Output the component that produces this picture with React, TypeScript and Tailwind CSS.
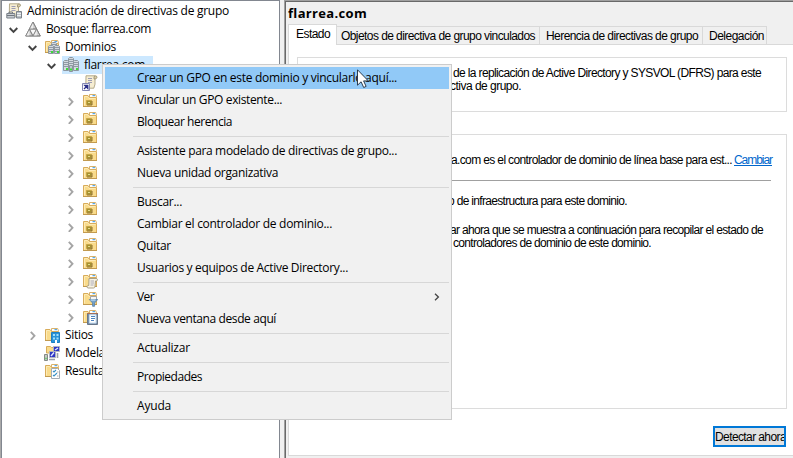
import { useLayoutEffect, useRef } from "react";
import type { ReactNode } from "react";
import { clsx } from "clsx";

const UI = "font-['Open_Sans','Noto_Sans',sans-serif] text-[12px]";
const CLASSIC = "font-['Liberation_Sans',Arial,sans-serif] text-[12px]";

/** Single-line label whose tracking is adjusted so that it fills `w` pixels. */
function Label({ w, className, children }: { w: number; className?: string; children: string }) {
  const ref = useRef<HTMLSpanElement>(null);
  useLayoutEffect(() => {
    const el = ref.current;
    if (!el) return;
    el.style.letterSpacing = "0px";
    const natural = el.getBoundingClientRect().width;
    el.style.letterSpacing = `${(w - natural) / children.length}px`;
  }, [w, children]);
  return (
    <span ref={ref} className={clsx("inline-block shrink-0 whitespace-pre", className)}>
      {children}
    </span>
  );
}

function Icon({ children }: { children: ReactNode }) {
  return (
    <svg width="16" height="16" viewBox="0 0 16 16" className="shrink-0">
      {children}
    </svg>
  );
}

function Scroll() {
  return (
    <>
      <path d="M4 .8h9v8.4l-1.2 4H2.6c-1.4-.2-1.3-2.2 0-2.4h1.2z" fill="#f6edd2" stroke="#aba07f" strokeWidth=".9" />
      <path d="M12 4V2c.2-1.6 3-1.5 3 .2 0 1.3-1 1.8-3 1.8z" fill="#dccfa8" stroke="#948a6c" strokeWidth=".8" />
      <path d="M6 3.5h4M6 5.5h4M6 7.5h4" stroke="#9c9cb4" />
    </>
  );
}

function Folder() {
  return (
    <>
      <path d="M7.5 4V1.5h6.2L14.500 4" fill="#fff" stroke="#d9b26c" />
      <path d="M10.500 2.600h2.500" stroke="#55a9ec" strokeWidth="1.2" />
      <path d="M1.500 13.500v-11h4.500l1.500 2h7v9z" fill="#f9db8b" stroke="#d8ac5b" />
      <path d="M2.500 12.500v-9h3l1.500 2h6.500" fill="none" stroke="#fdebb5" />
      <path d="M1 13.500h14" stroke="#c19a50" />
    </>
  );
}

function Server({ x, y, h }: { x: number; y: number; h: number }) {
  return (
    <g transform={`translate(${x} ${y})`}>
      <path d={`M.5 1.500l1-1h3l1 1v${h - 2}h-5z`} fill="#d3d9df" stroke="#8d979f" />
      <path d="M1 2.500h4M1 4.500h4M1 6.500h4" stroke="#7f8a94" strokeWidth=".8" />
      <path d={`M3 ${h - 2}h2`} stroke="#3ddb3a" strokeWidth="1.800" />
    </g>
  );
}

function OuBadge() {
  return (
    <>
      <path d="M4.500 7.500h5v4h-5z" fill="#a5922f" stroke="#c7a548" />
      <path d="M6 9.500h2" stroke="#e6d98a" />
      <path d="M5 12h5V8" fill="none" stroke="#80682a" strokeWidth=".9" />
    </>
  );
}

const icons = {
  console: (
    <Icon>
      <g transform="translate(-.5 0)"><Scroll /></g>
      <path d="M.8 10.500h8v4.500h-8z" fill="#c9cdd2" stroke="#7b828a" />
      <path d="M3 10V9h3.500v1M1 12.500h7.500" fill="none" stroke="#6f767e" />
      <path d="M10.500 8.500h5v6.500h-5z" fill="#bac0c6" stroke="#7b828a" />
      <path d="M11 10.500h4M11 12.500h4" stroke="#edf0f2" />
    </Icon>
  ),
  forest: (
    <Icon>
      <path d="M8 1l7.300 14H.7z" fill="#d2d2d2" stroke="#858585" strokeWidth=".9" />
      <path d="M4.300 8h7.400L8 15z" fill="#f8f8f8" stroke="#858585" strokeWidth=".9" />
      <path d="M8 1v7H4.300zM4.300 8v7H.7zM11.700 8v7H8z" fill="#eee" />
      <path d="M8 1l7.300 14H.7zM4.300 8h7.400L8 15z" fill="none" stroke="#858585" strokeWidth=".9" />
    </Icon>
  ),
  domains: (
    <Icon>
      <Folder />
      <Server x={7} y={3} h={9} />
      <Server x={4} y={6} h={9} />
      <Server x={10} y={6} h={9} />
    </Icon>
  ),
  domain: (
    <Icon>
      <Server x={5} y={0} h={12} />
      <Server x={0} y={3} h={11} />
      <Server x={10} y={3} h={11} />
      <path d="M6.500 8.500h3v6h-3z" fill="#c0c8cf" stroke="#8b959e" />
      <path d="M7 12.500h2" stroke="#3ddb3a" strokeWidth="2" />
    </Icon>
  ),
  link: (
    <Icon>
      <Scroll />
      <path d="M.500 8.500h7v7h-7z" fill="#fff" stroke="#8487b3" />
      <path d="M2 14l3-3M2.800 10.500h3v3z" stroke="#2b2f88" fill="#2b2f88" strokeWidth="1.300" />
    </Icon>
  ),
  ou: (
    <Icon>
      <Folder />
      <OuBadge />
    </Icon>
  ),
  gpoFolder: (
    <Icon>
      <Folder />
      <path d="M7 5.500h7c2 0 2 2.500.3 2.500H13.500L13 13c0 1.500-.6 2-1.500 2H6c-1.500-.3-1.300-2.200 0-2.500h.8z" fill="#f8f3e2" stroke="#a0977f" strokeWidth=".9" />
      <path d="M8.500 8h3.500M8.500 10h3.500M8.500 12h3" stroke="#a3a3b5" strokeWidth=".9" />
    </Icon>
  ),
  wmi: (
    <Icon>
      <Folder />
      <path d="M8.500 5.500h6v4h-6z" fill="#f6f6f6" stroke="#a5a5a5" />
      <path d="M7.300 8.500h8.400L12.600 12v3.300h-2V12z" fill="#74a2cb" stroke="#557fa6" strokeWidth=".8" />
      <path d="M8.500 9h5" stroke="#d6ecfb" />
    </Icon>
  ),
  starter: (
    <Icon>
      <Folder />
      <path d="M5.500 4.500h10v11h-10z" fill="#7891ad" stroke="#68778b" />
      <path d="M5 4.500h11" stroke="#a76e55" />
      <path d="M7.500 5.800h6.500v8.200H7.500z" fill="#fff" stroke="#c5dcf0" />
      <path d="M9 7.500h4M9 9.500h4M9 11.500h3" stroke="#4b82be" />
    </Icon>
  ),
  sites: (
    <Icon>
      <Folder />
      <path d="M7.500 5.500h8v10h-8z" fill="#2a93d8" stroke="#1c7fc2" />
      <path d="M9 7h2v2H9zM12.500 7h2v2h-2zM9 10.500h2v2H9zM12.500 10.500h2v2h-2z" fill="#9fe0fb" />
      <path d="M11 13h2v3h-2z" fill="#fff" />
    </Icon>
  ),
  model: (
    <Icon>
      <path d="M2.500 8V1.500h4l1 1h4V8z" fill="#f9db8b" stroke="#d8ac5b" />
      <path d="M9.500 1.500h6v5h-6zM5.500 6.500h6v6h-6z" fill="#2d35c4" stroke="#b0b3c0" />
      <path d="M7 11l3-3.500M11 5l3-2" stroke="#dfe5ff" strokeWidth="1.400" />
      <path d="M.500 9.500h3v6h-3z" fill="#c6cac4" stroke="#848a86" />
      <path d="M1.500 13.500h1" stroke="#27cd38" strokeWidth="1.600" />
      <path d="M5 14.500h6M13.500 8v5" stroke="#9ba1aa" strokeWidth="1.600" />
    </Icon>
  ),
  results: (
    <Icon>
      <Folder />
      <path d="M7.500 5.500h6l2 2v8h-8z" fill="#fff" stroke="#a3abb5" />
      <path d="M9 8l1 1 2-2M9 12l1 1 3-3" fill="none" stroke="#3a91c6" strokeWidth="1.100" />
      <path d="M13 9h1.500M13 13h1.500" stroke="#aaa" />
    </Icon>
  ),
};

function Chevron({ open }: { open?: boolean }) {
  return (
    <svg width="9" height="10" viewBox="0 0 9 10" className="shrink-0" fill="none">
      {open ? (
        <path d="M.7 4l3.800 3.800L8.300 4" stroke="#444" strokeWidth="1.900" />
      ) : (
        <path d="M2.800 1.800l3.700 4-3.700 4" stroke="#a5a5a5" strokeWidth="1.900" />
      )}
    </svg>
  );
}

type Node = { pad: string; icon: keyof typeof icons; state?: "open" | "closed"; text?: string; w?: number; selected?: boolean };

const ou: Node = { pad: "pl-[64px]", icon: "ou", state: "closed" };
const tree: Node[] = [
  { pad: "pl-[4px]", icon: "console", text: "Administración de directivas de grupo", w: 202 },
  { pad: "pl-[7px]", icon: "forest", state: "open", text: "Bosque: flarrea.com", w: 105 },
  { pad: "pl-[26px]", icon: "domains", state: "open", text: "Dominios", w: 51 },
  { pad: "pl-[45px]", icon: "domain", state: "open", text: "flarrea.com", w: 61, selected: true },
  { pad: "pl-[80px]", icon: "link" },
  ou, ou, ou, ou, ou, ou, ou, ou, ou, ou,
  { pad: "pl-[64px]", icon: "gpoFolder", state: "closed" },
  { pad: "pl-[64px]", icon: "wmi", state: "closed" },
  { pad: "pl-[64px]", icon: "starter", state: "closed" },
  { pad: "pl-[26px]", icon: "sites", state: "closed", text: "Sitios", w: 28 },
  { pad: "pl-[42px]", icon: "model", text: "Modela", w: 40 },
  { pad: "pl-[42px]", icon: "results", text: "Resulta", w: 39 },
];

function TreeRow({ node }: { node: Node }) {
  return (
    <div className={clsx("flex h-[18px] items-center", node.pad)}>
      {node.state && (
        <span className="mr-[7px] flex">
          <Chevron open={node.state === "open"} />
        </span>
      )}
      <span className={clsx("flex h-[18px] items-center", node.selected ? "-ml-px w-[91px] bg-[#cce8ff] pl-px" : "")}>
        {icons[node.icon]}
        {node.text && <Label w={node.w ?? 0} className="ml-[5px] leading-[18px]">{node.text}</Label>}
      </span>
    </div>
  );
}

type Entry = { text: string; w: number; hot?: boolean; sub?: boolean };
const groups: Entry[][] = [
  [
    { text: "Crear un GPO en este dominio y vincularlo aquí...", w: 260, hot: true },
    { text: "Vincular un GPO existente...", w: 145 },
    { text: "Bloquear herencia", w: 95 },
  ],
  [
    { text: "Asistente para modelado de directivas de grupo...", w: 260 },
    { text: "Nueva unidad organizativa", w: 141 },
  ],
  [
    { text: "Buscar...", w: 45 },
    { text: "Cambiar el controlador de dominio...", w: 195 },
    { text: "Quitar", w: 34 },
    { text: "Usuarios y equipos de Active Directory...", w: 211 },
  ],
  [
    { text: "Ver", w: 17, sub: true },
    { text: "Nueva ventana desde aquí", w: 139 },
  ],
  [{ text: "Actualizar", w: 53 }],
  [{ text: "Propiedades", w: 65 }],
  [{ text: "Ayuda", w: 34 }],
];

function ContextMenu() {
  return (
    <div className="absolute left-[102px] top-[64px] flex h-[356px] w-[350px] flex-col border border-[#ccc] bg-[#f1f1f1] p-[2px] text-black">
      {groups.map((group, i) => (
        <div key={i}>
          {i > 0 && (
            <div className="flex h-[7px] items-center pl-[28px]">
              <div className="h-px w-full bg-[#d7d7d7]" />
            </div>
          )}
          {group.map((entry) => (
            <div key={entry.text} className={clsx("flex h-[22px] items-center justify-between pl-[32px] pr-[9px]", entry.hot && "bg-[#91c9f7]")}>
              <Label w={entry.w} className="leading-[22px]">{entry.text}</Label>
              {entry.sub && (
                <svg width="6" height="8" viewBox="0 0 6 8" fill="none">
                  <path d="M1 .7L4.400 4 1 7.300" stroke="#444" strokeWidth="1.300" />
                </svg>
              )}
            </div>
          ))}
        </div>
      ))}
    </div>
  );
}

function Tab({ w, className, children }: { w: number; className: string; children: string }) {
  return (
    <div className={clsx("flex h-[18px] items-center border-r border-t border-[#d9d9d9] bg-[#f0f0f0]", className)}>
      <Label w={w}>{children}</Label>
    </div>
  );
}

export default function App() {
  return (
    <div className={clsx("relative flex h-[458px] w-[793px] overflow-hidden bg-[#f0f0f0] text-black", UI)}>
      <div className="w-px shrink-0 bg-[#a9a9a9]" />
      <nav className="w-[279px] shrink-0 overflow-hidden border border-b-0 border-[#828790] bg-white pt-px">
        {tree.map((node, i) => (
          <TreeRow key={i} node={node} />
        ))}
      </nav>
      <div className="w-[4px] shrink-0" />
      <main className="flex min-w-0 flex-1 flex-col border-l border-t border-[#a0a0a0]">
        <div className="flex flex-1 flex-col border-l border-t border-[#696969]">
          <h1 className="flex h-[22px] items-center pl-[2px] font-['Open_Sans','Noto_Sans',sans-serif] text-[13px] font-bold leading-[22px]">
            <Label w={79}>flarrea.com</Label>
          </h1>
          <div className={clsx("flex flex-1 flex-col pl-[2px]", CLASSIC)}>
            <div className="flex h-[20px] items-end">
              <div className="z-10 -mb-px flex h-[21px] w-[49px] items-center border border-b-0 border-[#d9d9d9] bg-white pb-[2px] pl-[7px]">
                <Label w={34}>Estado</Label>
              </div>
              <Tab w={194} className="w-[203px] pl-[4px]">Objetos de directiva de grupo vinculados</Tab>
              <Tab w={152} className="w-[163px] pl-[6px]">Herencia de directivas de grupo</Tab>
              <Tab w={55} className="w-[64px] pl-[6px]">Delegación</Tab>
            </div>
            <section className="flex h-[412px] flex-col border border-r-0 border-[#d9d9d9] bg-white pl-[8px] pr-[6px] pt-[12px]">
              <div className="flex h-[55px] flex-col items-start border border-[#dcdcdc] pl-[155px] pt-[9px] leading-[13px]">
                <Label w={308}>de la replicación de Active Directory y SYSVOL (DFRS) para este</Label>
                <Label w={71} className="-ml-[3px]">ctiva de grupo.</Label>
              </div>
              <div className="mt-[22px] flex h-[275px] flex-col items-start border border-[#dcdcdc] pl-[153px] pt-[19px] leading-[13px]">
                <div className="flex gap-[2px]">
                  <Label w={281}>a.com es el controlador de dominio de línea base para est...</Label>
                  <Label w={38} className="text-[#0066cc] underline">Cambiar</Label>
                </div>
                <div className="mt-[13px] h-px w-[320px] bg-[#a0a0a0]" />
                <Label w={179} className="-ml-[3px] mt-[14px]">o de infraestructura para este dominio.</Label>
                <Label w={313} className="-ml-px mt-[16px]">ar ahora que se muestra a continuación para recopilar el estado de</Label>
                <Label w={198} className="ml-[2px]">controladores de dominio de este dominio.</Label>
              </div>
              <button className="mr-px mt-[17px] flex h-[21px] w-[73px] items-center self-end overflow-hidden border-2 border-[#0078d7] bg-[#e1e1e1]">
                <Label w={71}>Detectar ahora</Label>
              </button>
            </section>
          </div>
        </div>
      </main>
      <ContextMenu />
      <svg className="absolute left-[357px] top-[69px]" width="12" height="20" viewBox="0 0 12 20">
        <path d="M.5 .8v15.400l3.600-3.400 2.600 5.700 2.400-1.100-2.500-5.500h4.700z" fill="#fff" stroke="#1b2a3c" strokeWidth=".9" />
      </svg>
    </div>
  );
}
